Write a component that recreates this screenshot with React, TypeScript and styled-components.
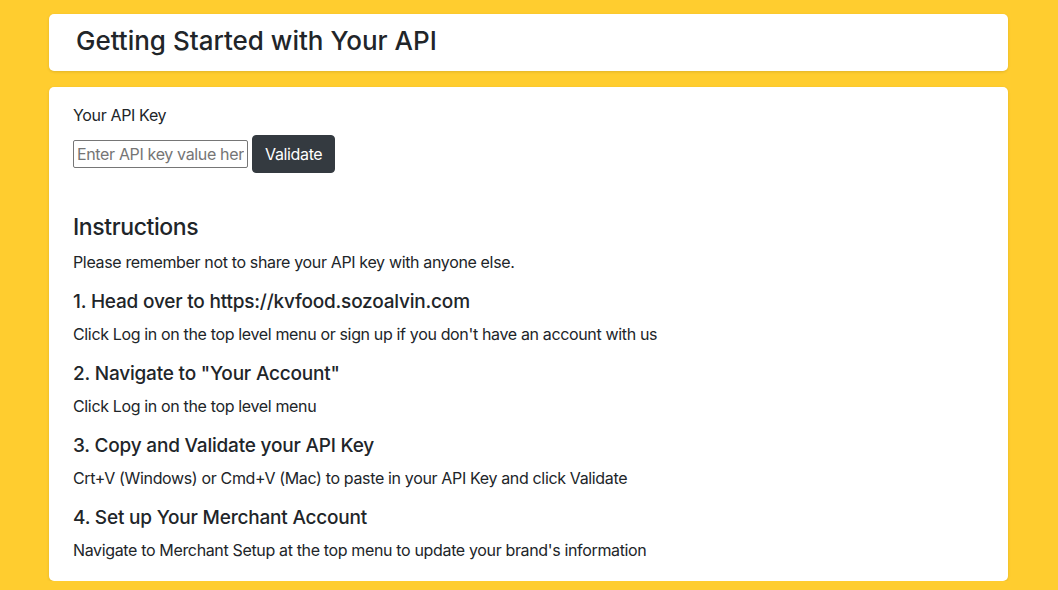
import React from 'react'
import styled, { createGlobalStyle } from 'styled-components'

const GlobalStyle = createGlobalStyle`
  html, body {
    margin: 0;
    padding: 0;
    background: #ffcd2f;
  }
  body {
    font-family: Inter, "Noto Sans", "Liberation Sans", sans-serif;
    color: #212529;
    font-size: 16px;
    line-height: 1.5;
    letter-spacing: -0.35px;
  }
`

const steps = [
  {
    title: '1. Head over to https://kvfood.sozoalvin.com',
    text: "Click Log in on the top level menu or sign up if you don't have an account with us",
  },
  {
    title: '2. Navigate to "Your Account"',
    text: 'Click Log in on the top level menu',
  },
  {
    title: '3. Copy and Validate your API Key',
    text: 'Crt+V (Windows) or Cmd+V (Mac) to paste in your API Key and click Validate',
  },
  {
    title: '4. Set up Your Merchant Account',
    text: "Navigate to Merchant Setup at the top menu to update your brand's information",
  },
]

const App: React.FC = () => {
  return (
    <>
      <GlobalStyle />
      <Page>
        <Card>
          <HeaderBody>
            <Title>Getting Started with Your API</Title>
          </HeaderBody>
        </Card>
        <Card>
          <MainBody>
            <Label htmlFor="api-key">Your API Key</Label>
            <Form onSubmit={(e) => e.preventDefault()}>
              <KeyInput id="api-key" type="text" placeholder="Enter API key value here" />
              <Button type="submit">Validate</Button>
            </Form>
            <SectionTitle>Instructions</SectionTitle>
            <Text>Please remember not to share your API key with anyone else.</Text>
            {steps.map((step, i) => (
              <React.Fragment key={step.title}>
                <StepTitle>{step.title}</StepTitle>
                <Text last={i === steps.length - 1}>{step.text}</Text>
              </React.Fragment>
            ))}
          </MainBody>
        </Card>
      </Page>
    </>
  )
}

export default App

const Page = styled.div`
  width: 959px;
  margin: 14px auto 0 49px;
  display: flex;
  flex-direction: column;
  gap: 16px;
`

const Card = styled.div`
  background: #fff;
  border-radius: 5px;
  box-shadow: 0 1px 3px rgba(0, 0, 0, 0.12);
`

const HeaderBody = styled.div`
  padding: 10px 27px 13px;
`

const Title = styled.h3`
  margin: 0;
  font-size: 26px;
  font-weight: 500;
  line-height: 1.3;
  letter-spacing: 0;
`

const MainBody = styled.div`
  padding: 16px 24px 19px;
`

const Label = styled.label`
  display: block;
  margin-bottom: 8px;
`

const Form = styled.form`
  display: flex;
  align-items: center;
  gap: 4px;
  margin-bottom: 40px;
`

const KeyInput = styled.input`
  box-sizing: border-box;
  width: 175px;
  height: 28px;
  padding: 1px 3px;
  border: 1px solid #767676;
  border-radius: 2px;
  font-family: inherit;
  font-size: 16px;
  letter-spacing: -0.35px;
  color: #212529;
  ::placeholder {
    color: #757575;
  }
`

const Button = styled.button`
  box-sizing: border-box;
  height: 38px;
  padding: 6px 12px;
  border: 1px solid #343a40;
  border-radius: 4px;
  background: #343a40;
  color: #fff;
  font-family: inherit;
  font-size: 16px;
  letter-spacing: -0.35px;
  line-height: 24px;
  cursor: pointer;
`

const SectionTitle = styled.h4`
  margin: 0 0 8px;
  font-size: 23px;
  font-weight: 500;
  line-height: 29px;
  letter-spacing: -0.4px;
`

const StepTitle = styled.h5`
  margin: 0 0 8px;
  font-size: 19px;
  font-weight: 500;
  line-height: 24px;
  letter-spacing: -0.2px;
`

const Text = styled.p<{ last?: boolean }>`
  margin: 0 0 ${(p) => (p.last ? '0' : '16px')};
  font-size: 16px;
  line-height: 24px;
`
